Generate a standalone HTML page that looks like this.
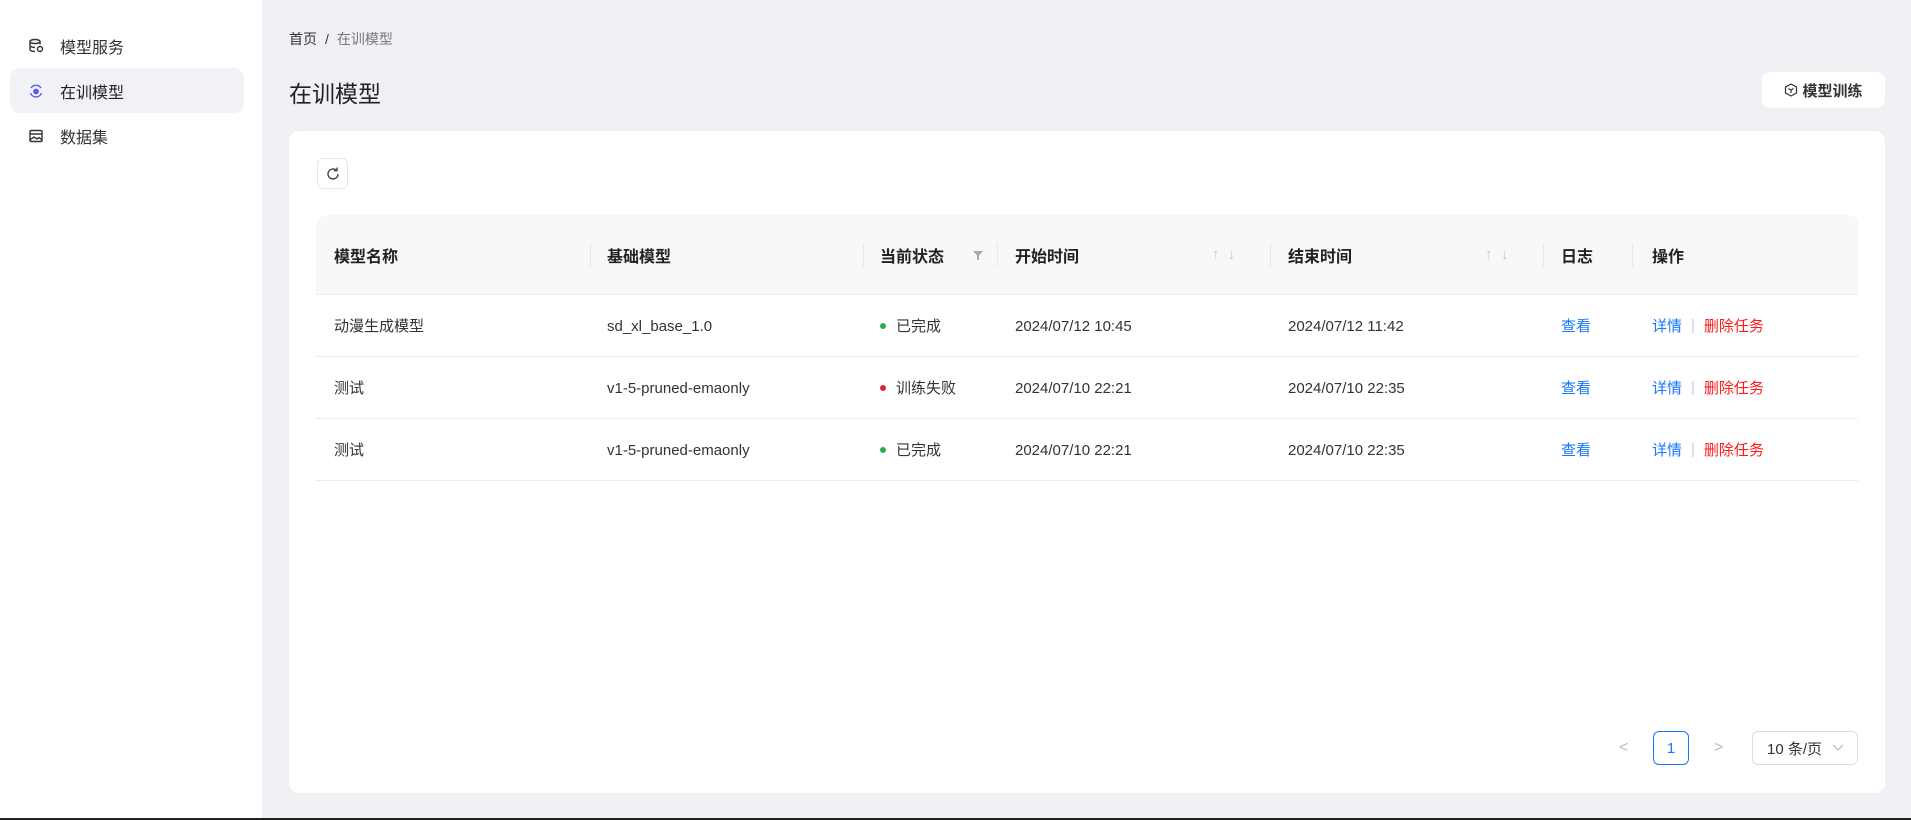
<!DOCTYPE html>
<html><head><meta charset="utf-8"><style>
*{box-sizing:border-box;margin:0;padding:0}
body{width:1911px;height:820px;overflow:hidden;background:#f0f1f5;font-family:"Liberation Sans","Noto Sans CJK SC",sans-serif;color:#1f1f1f;position:relative}
.side{position:absolute;left:0;top:0;width:262px;height:818px;background:#fff}
.item{position:absolute;left:10px;width:234px;height:45px;display:flex;align-items:center;font-size:16px;color:#333;padding-left:50px}
.item svg{position:absolute;left:18px}
.item.act{background:#f1f2f6;border-radius:10px;color:#222}
.bc{position:absolute;left:289px;top:29px;font-size:14px;color:#333}
.bc .s{margin:0 8px}
.bc .c{color:#777}
.title{position:absolute;left:289px;top:75px;font-size:23px;color:#222}
.btn{position:absolute;left:1762px;top:72px;width:123px;height:36px;background:#fff;border-radius:8px;font-size:15px;display:flex;align-items:center;justify-content:center;gap:4px;color:#333;font-weight:bold}
.card{position:absolute;left:289px;top:131px;width:1596px;height:662px;background:#fff;border-radius:10px}
.ref{position:absolute;left:28px;top:27px;width:31px;height:31px;border:1px solid #e6e6e6;border-radius:6px;display:flex;align-items:center;justify-content:center}
.thead{position:absolute;left:27px;top:84px;width:1542px;height:80px;background:#f8f8f9;border-radius:10px 10px 0 0;border-bottom:1px solid #ececec}
.th{position:absolute;top:0;height:79px;display:flex;align-items:center;font-size:16px;font-weight:bold;color:#222}
.sep{position:absolute;top:28px;width:1px;height:24px;background:#e8e8e8}
.row{position:absolute;left:27px;width:1542px;height:62px;border-bottom:1px solid #ececec;font-size:15px;color:#333}
.row div{position:absolute;top:0;height:61px;display:flex;align-items:center}
.row .l{position:relative;top:1px}
.dot{display:inline-block;width:6px;height:6px;border-radius:50%;margin-right:10px}
.blue{color:#1677ff}.red{color:#ff1a1a}
.bar{color:#ccd;margin:0 9px}
.pg{position:absolute;top:600px;height:34px}
.arr{position:absolute;top:0;height:79px;display:flex;align-items:center;color:#c8c8c8;font-size:15px}
</style></head><body>
<div class="side">
 <div class="item" style="top:23px"><svg width="16" height="16" viewBox="0 0 16 16" fill="none" stroke="#333" stroke-width="1.4"><ellipse cx="7" cy="3.5" rx="5" ry="2"/><path d="M2 3.5v8c0 1.1 2.2 2 5 2M12 3.5v3M2 7.5c0 1.1 2.2 2 5 2"/><circle cx="12" cy="11" r="2.5"/></svg>模型服务</div>
 <div class="item act" style="top:68px"><svg width="16" height="16" viewBox="0 0 16 16" fill="none" stroke="#5b5bf0" stroke-width="1.4"><path d="M3 5a6 6 0 0 1 10 0M13.5 10a6 6 0 0 1-5.5 4M2.5 10a6 6 0 0 0 5.5 4"/><circle cx="8" cy="8.5" r="2.2" fill="#5b5bf0"/></svg>在训模型</div>
 <div class="item" style="top:113px"><svg width="16" height="16" viewBox="0 0 16 16" fill="none" stroke="#333" stroke-width="1.4"><rect x="2" y="2.5" width="12" height="11" rx="1"/><path d="M2 6h12M2 12l4-3 3 2 2-1.5 3 2.5"/></svg>数据集</div>
</div>
<div class="bc">首页<span class="s">/</span><span class="c">在训模型</span></div>
<div class="title">在训模型</div>
<div class="btn"><svg width="14" height="14" viewBox="0 0 14 14" fill="none" stroke="#333" stroke-width="1.2"><path d="M7 1l5.5 3v6L7 13 1.5 10V4z"/><path d="M4.5 5.5L7 7l2.5-1.5M7 7v3"/></svg>模型训练</div>
<div class="card">
 <div class="ref"><svg width="16" height="16" viewBox="0 0 16 16" fill="none" stroke="#444" stroke-width="1.4"><path d="M13 8a5 5 0 1 1-1.5-3.6"/><path d="M12 1.5v3.2H8.8"/></svg></div>
 <div class="thead">
  <div class="th" style="left:18px">模型名称</div>
  <div class="sep" style="left:274px"></div>
  <div class="th" style="left:291px">基础模型</div>
  <div class="sep" style="left:547px"></div>
  <div class="th" style="left:564px">当前状态</div>
  <svg style="position:absolute;left:656px;top:34px" width="12" height="12" viewBox="0 0 12 12"><path d="M1 2h10L7 6.5V11H5V6.5z" fill="#aaa"/></svg>
  <div class="sep" style="left:681px"></div>
  <div class="th" style="left:699px">开始时间</div>
  <div class="arr" style="left:896px">↑&nbsp;&nbsp;↓</div>
  <div class="sep" style="left:954px"></div>
  <div class="th" style="left:972px">结束时间</div>
  <div class="arr" style="left:1169px">↑&nbsp;&nbsp;↓</div>
  <div class="sep" style="left:1227px"></div>
  <div class="th" style="left:1245px">日志</div>
  <div class="sep" style="left:1316px"></div>
  <div class="th" style="left:1336px">操作</div>
 </div>
 <div class="row" style="top:164px"><div style="left:18px">动漫生成模型</div><div style="left:291px"><span class="l">sd_xl_base_1.0</span></div><div style="left:564px"><span class="dot" style="background:#2eaa4f"></span>已完成</div><div style="left:699px"><span class="l">2024/07/12 10:45</span></div><div style="left:972px"><span class="l">2024/07/12 11:42</span></div><div style="left:1245px" class="blue">查看</div><div style="left:1336px"><span class="blue">详情</span><span class="bar">|</span><span class="red">删除任务</span></div></div>
 <div class="row" style="top:226px"><div style="left:18px">测试</div><div style="left:291px"><span class="l">v1-5-pruned-emaonly</span></div><div style="left:564px"><span class="dot" style="background:#d9262a"></span>训练失败</div><div style="left:699px"><span class="l">2024/07/10 22:21</span></div><div style="left:972px"><span class="l">2024/07/10 22:35</span></div><div style="left:1245px" class="blue">查看</div><div style="left:1336px"><span class="blue">详情</span><span class="bar">|</span><span class="red">删除任务</span></div></div>
 <div class="row" style="top:288px"><div style="left:18px">测试</div><div style="left:291px"><span class="l">v1-5-pruned-emaonly</span></div><div style="left:564px"><span class="dot" style="background:#2eaa4f"></span>已完成</div><div style="left:699px"><span class="l">2024/07/10 22:21</span></div><div style="left:972px"><span class="l">2024/07/10 22:35</span></div><div style="left:1245px" class="blue">查看</div><div style="left:1336px"><span class="blue">详情</span><span class="bar">|</span><span class="red">删除任务</span></div></div>
 <div class="pg" style="left:1330px;top:608px;color:#bbb;font-size:16px">&lt;</div>
 <div class="pg" style="left:1364px;width:36px;border:1px solid #1677ff;border-radius:6px;color:#1677ff;font-size:15px;display:flex;align-items:center;justify-content:center">1</div>
 <div class="pg" style="left:1425px;top:608px;color:#bbb;font-size:16px">&gt;</div>
 <div class="pg" style="left:1463px;width:106px;border:1px solid #ddd;border-radius:6px;font-size:15px;display:flex;align-items:center;padding-left:14px;color:#333">10 条/页<svg style="margin-left:10px" width="12" height="8" viewBox="0 0 12 8" fill="none" stroke="#bbb" stroke-width="1.2"><path d="M1 1l5 5 5-5"/></svg></div>
</div>
<div style="position:absolute;left:0;top:818px;width:1911px;height:2px;background:#222"></div>
</body></html>
